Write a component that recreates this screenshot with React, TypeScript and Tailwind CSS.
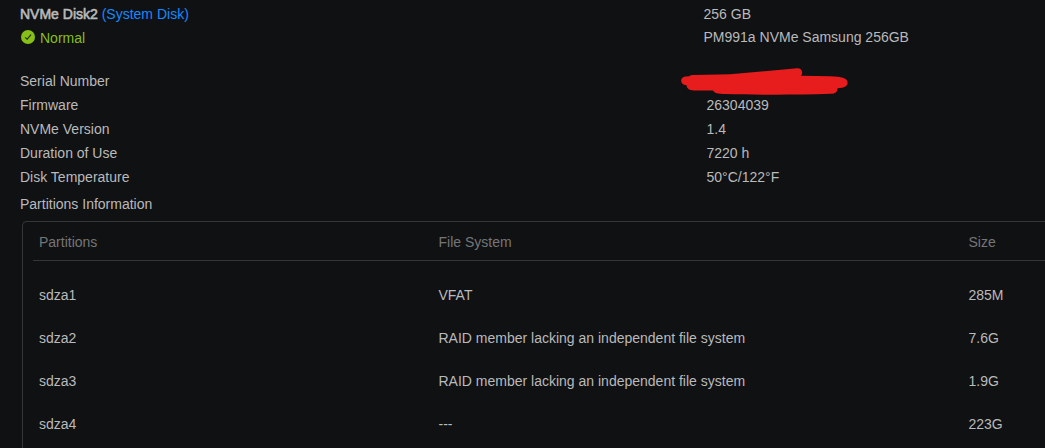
const details = [
  { label: "Serial Number", value: "" },
  { label: "Firmware", value: "26304039" },
  { label: "NVMe Version", value: "1.4" },
  { label: "Duration of Use", value: "7220 h" },
  { label: "Disk Temperature", value: "50°C/122°F" },
]

const partitions = [
  { name: "sdza1", fs: "VFAT", size: "285M" },
  { name: "sdza2", fs: "RAID member lacking an independent file system", size: "7.6G" },
  { name: "sdza3", fs: "RAID member lacking an independent file system", size: "1.9G" },
  { name: "sdza4", fs: "---", size: "223G" },
]

function CheckIcon() {
  return (
    <svg width="14" height="14" viewBox="0 0 14 14" className="mt-[4px] ml-px shrink-0">
      <circle cx="7" cy="7" r="7" fill="#86bf17" />
      <path d="M4.2 7.4 L6.1 9.300 L10 4.600" fill="none" stroke="#1b2410" strokeWidth="1.1" />
    </svg>
  )
}

// red marker over the serial number
function Redaction() {
  return (
    <svg width="169" height="28" viewBox="0 0 169 28" className="-ml-[27px] -mt-[2px] shrink-0">
      <path
        d="M5.500 9.500 L9 9.300 C10 8.200 12 8 14 8 L50 7.300 L117 1.200 C122 1 123.500 5.500 121 8.700 L150 9.200 C156 9.400 160 10 163 10.800 C170 13 168.500 20 162 20.700 L157.500 21.200 C157.500 25 155 26.600 151 26.800 C116 28 78 28 45 27 C38 27 34 26 33 23.500 L14 23.500 C9 23.500 7 21.500 6.500 18.300 C-0.500 17.500 -0.500 10.500 5.500 9.500 Z"
        fill="#e71d1d"
      />
    </svg>
  )
}

export default function App() {
  return (
    <div className="h-[448px] w-[1045px] overflow-hidden bg-[#101113] pt-[2px] font-['Liberation_Sans',Arial,sans-serif] text-[14px] leading-6 text-[#b9babb]">
      <div className="flex h-[67px] pl-5">
        <div className="w-[683.5px]">
          <div>
            <span className="[-webkit-text-stroke:0.6px_#b9babb]">NVMe Disk2</span>{" "}
            <span className="text-[#148aff]">(System Disk)</span>
          </div>
          <div className="flex gap-[5px] text-[#86bf17]">
            <CheckIcon />
            <span>Normal</span>
          </div>
        </div>
        <div>
          <div className="h-[23px]">256 GB</div>
          <div>PM991a NVMe Samsung 256GB</div>
        </div>
      </div>

      <div className="pl-5">
        {details.map((item) => (
          <div key={item.label} className="flex h-6">
            <div className="w-[686.5px]">{item.label}</div>
            {item.value ? <div>{item.value}</div> : <Redaction />}
          </div>
        ))}
        <div className="mt-[3px]">Partitions Information</div>
      </div>

      <div className="mt-[5px] ml-[22px] h-[240px] rounded-tl-[5px] border-t border-l border-[#353638] pl-[10px]">
        <div className="flex h-[39px] border-b border-[#353638] pt-2 pl-[6px] text-[#757677]">
          <div className="w-[399.5px]">Partitions</div>
          <div className="w-[530px]">File System</div>
          <div>Size</div>
        </div>
        <div className="pt-[13px]">
          {partitions.map((p) => (
            <div key={p.name} className="flex h-[43px] pt-[9px] pl-[6px]">
              <div className="w-[399.5px]">{p.name}</div>
              <div className="w-[530px]">{p.fs}</div>
              <div>{p.size}</div>
            </div>
          ))}
        </div>
      </div>
    </div>
  )
}
